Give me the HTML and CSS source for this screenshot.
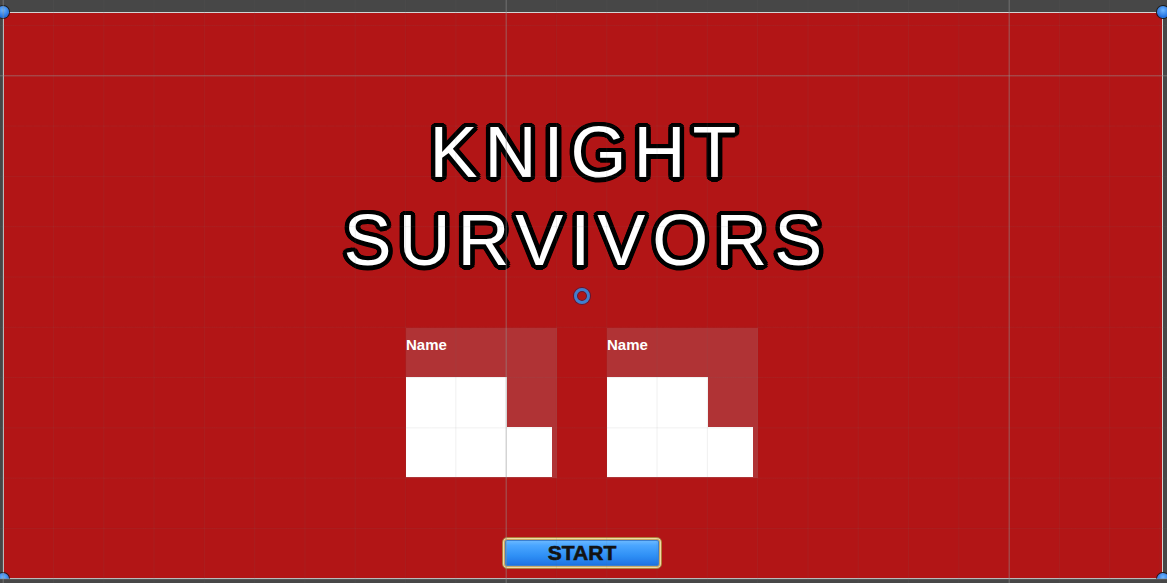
FILE: index.html
```html
<!DOCTYPE html>
<html lang="en">
<head>
    <meta charset="UTF-8">
    <meta name="viewport" content="width=device-width, initial-scale=1.0">
    <title>Knight Survivors - Main Menu</title>
    <link rel="stylesheet" href="styles.css">
</head>
<body>

    <div class="canvas">
        <h1 class="title">KNIGHT<br>SURVIVORS</h1>

        <div class="pivot"></div>

        <div class="slots">
            <div class="slot">
                <p class="slotName">Name</p>
                <div class="cellRow cellRowTop"></div>
                <div class="cellRow cellRowBottom"></div>
            </div>
            <div class="slot">
                <p class="slotName">Name</p>
                <div class="cellRow cellRowTop"></div>
                <div class="cellRow cellRowBottom"></div>
            </div>
        </div>

        <button class="startButton">START</button>

        <!-- rect handles on the canvas corners -->
        <span class="handle handleTL"></span>
        <span class="handle handleTR"></span>
        <span class="handle handleBL"></span>
        <span class="handle handleBR"></span>
    </div>

    <!-- scene grid drawn over everything -->
    <div class="sceneGrid"></div>

</body>
</html>
```

FILE: styles.css
```css
body {
    margin: 0;
    padding: 0;
    background-color: #474747;
    font-family: "Liberation Sans", Arial, sans-serif;
    overflow: hidden;
}

.canvas {
    position: relative;
    box-sizing: border-box;
    width: 1160px;
    height: 567px;
    margin: 12px 0 0 3px;
    border: 1px solid #d4d4d4;
    background-color: #b21516;
    display: flex;
    flex-direction: column;
    align-items: center;
}

.title {
    margin: 95px 0 0 0;
    padding-left: 7px;
    font-size: 72px;
    font-weight: normal;
    line-height: 88px;
    letter-spacing: 7px;
    text-align: center;
    color: #fff;
    /* round black outline */
    text-shadow:
        4.5px 0 0 #000, -4.5px 0 0 #000, 0 4.5px 0 #000, 0 -4.5px 0 #000,
        4.2px 1.7px 0 #000, -4.2px 1.7px 0 #000, 4.2px -1.7px 0 #000, -4.2px -1.7px 0 #000,
        1.7px 4.2px 0 #000, -1.7px 4.2px 0 #000, 1.7px -4.2px 0 #000, -1.7px -4.2px 0 #000,
        3.2px 3.2px 0 #000, -3.2px 3.2px 0 #000, 3.2px -3.2px 0 #000, -3.2px -3.2px 0 #000,
        2.5px 0 0 #000, -2.5px 0 0 #000, 0 2.5px 0 #000, 0 -2.5px 0 #000;
}

.pivot {
    box-sizing: border-box;
    width: 16px;
    height: 16px;
    margin-top: 4px;
    margin-left: -2px;
    border-radius: 50%;
    border: 3px solid #3f7fcf;
    box-shadow: 0 0 0 1px rgba(30, 30, 80, 0.6), inset 0 0 0 1px rgba(30, 30, 80, 0.6);
}

.slots {
    display: flex;
    gap: 50px;
    margin-top: 24px;
    margin-left: -2px;
}

.slot {
    width: 151px;
    height: 150px;
    background-color: #b03335;
}

.slotName {
    margin: 0;
    height: 49px;
    padding-top: 8px;
    box-sizing: border-box;
    font-size: 15px;
    font-weight: bold;
    line-height: 18px;
    color: #fff;
}

.cellRow {
    height: 50px;
    background-color: #fff;
}

.cellRowTop {
    width: 101px;
}

.cellRowBottom {
    width: 146px;
}

.startButton {
    box-sizing: border-box;
    width: 160px;
    height: 32px;
    margin-top: 59px;
    margin-left: -2px;
    padding: 0;
    border: 1px solid #b0803a;
    border-radius: 5px;
    background: linear-gradient(#7cc2ff 0%, #4aa6ff 25%, #2e8ff5 60%, #2178e6 85%, #1a62c4 100%);
    box-shadow: inset 0 0 0 1px #f0d9a4, inset 0 0 0 2px #c9a866, inset 0 0 0 3px #3a7fd0;
    font-family: "Liberation Sans", Arial, sans-serif;
    font-size: 21px;
    font-weight: bold;
    color: #121212;
    -webkit-text-stroke: 0.6px #121212;
    line-height: 30px;
}

.handle {
    position: absolute;
    width: 12px;
    height: 12px;
    border-radius: 50%;
    background: radial-gradient(circle at 50% 35%, #6fb6ff, #1f6fe0 70%);
    box-shadow: 0 0 0 1px #1b1b1b;
}

.handleTL { left: -7px; top: -7px; }
.handleTR { right: -7px; top: -7px; }
.handleBL { left: -7px; bottom: -7px; }
.handleBR { right: -7px; bottom: -7px; }

.sceneGrid {
    position: fixed;
    top: 0;
    left: 0;
    right: 0;
    bottom: 0;
    pointer-events: none;
    background-image:
        linear-gradient(to right, rgba(150, 150, 150, 0.5) 1px, transparent 1px),
        linear-gradient(to bottom, rgba(150, 150, 150, 0.5) 1px, transparent 1px),
        linear-gradient(to right, rgba(110, 110, 110, 0.1) 1px, transparent 1px),
        linear-gradient(to bottom, rgba(110, 110, 110, 0.1) 1px, transparent 1px);
    background-size: 503px 503px, 503px 503px, 50.3px 50.3px, 50.3px 50.3px;
    background-position: 2.7px 0, 0 75.3px, 2.7px 0, 0 -25.3px;
}
```
